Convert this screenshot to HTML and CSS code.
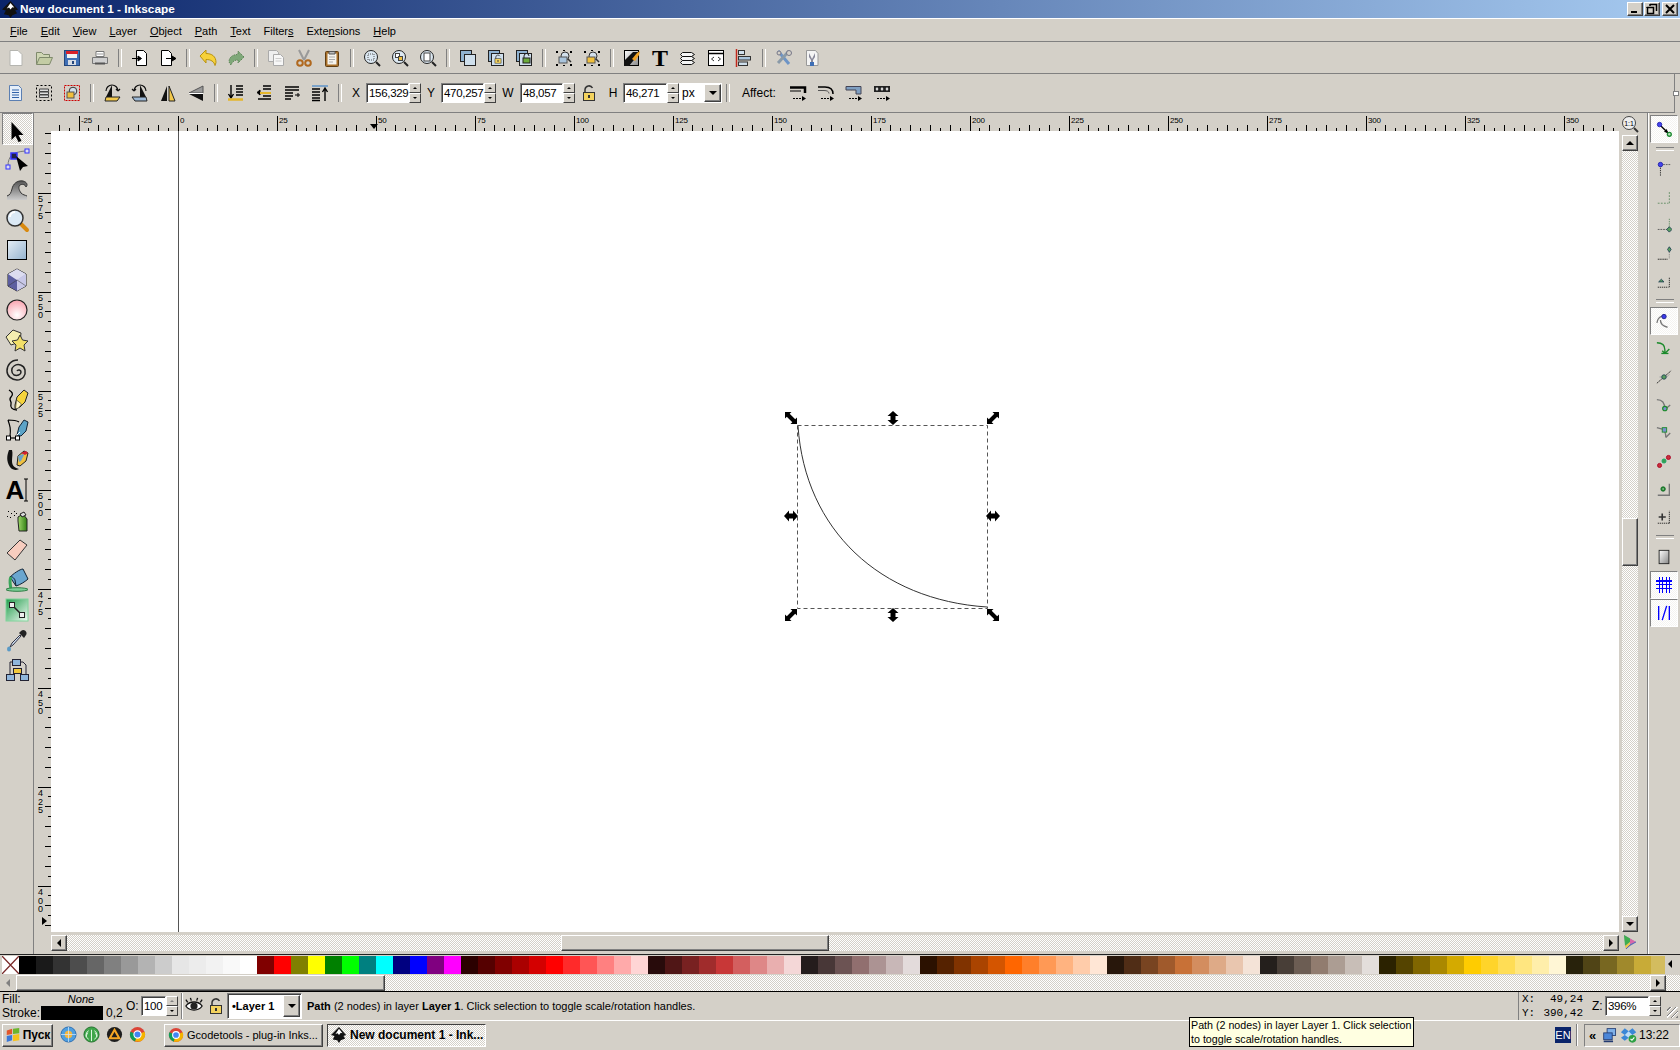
FILE: index.html
```html
<!DOCTYPE html>
<html lang="en">
<head>
<meta charset="utf-8">
<title>New document 1 - Inkscape</title>
<link rel="stylesheet" href="styles.css">
</head>
<body>
<svg class="defs" width="0" height="0" aria-hidden="true">
<defs>
<linearGradient id="gBlue" x1="0" y1="0" x2="1" y2="1"><stop offset="0" stop-color="#e6eef5"/><stop offset="1" stop-color="#94b3cf"/></linearGradient>
<linearGradient id="gGray" x1="0" y1="0" x2="0" y2="1"><stop offset="0" stop-color="#555"/><stop offset="1" stop-color="#ccc"/></linearGradient>
<linearGradient id="gWB" x1="0" y1="0" x2="1" y2="1"><stop offset="0" stop-color="#fff"/><stop offset="1" stop-color="#888"/></linearGradient>
<linearGradient id="gGreen" x1="0" y1="0" x2="1" y2="1"><stop offset="0" stop-color="#1f9c4a"/><stop offset="1" stop-color="#f2faf4"/></linearGradient>
<radialGradient id="gPink" cx=".5" cy=".75" r=".7"><stop offset="0" stop-color="#fff"/><stop offset="1" stop-color="#f9a9b4"/></radialGradient>
<linearGradient id="gCan" x1="0" y1="0" x2="1" y2="0"><stop offset="0" stop-color="#9fd86a"/><stop offset="1" stop-color="#2f7d12"/></linearGradient>
<symbol id="dbl" viewBox="0 0 12 14" overflow="visible"><path d="M6 0l5.500 5H8.500v4h3L6 14 .5 9h3V5H.5z" fill="#000"/></symbol>
<symbol id="diag" viewBox="0 0 12 12" overflow="visible"><path d="M0 0h6.500L4.700 1.800l5.500 5.500L12 5.500V12H5.500l1.800-1.800-5.500-5.500L0 6.500z" fill="#000"/></symbol>
<symbol id="tickH" viewBox="0 0 99 6"><path d="M9.500 3v3M19.500 0v6M29.500 3v3M39.500 0v6M49.500 3v3M59.500 0v6M69.500 3v3M79.500 0v6M89.500 3v3" stroke="#000" shape-rendering="crispEdges"/></symbol>
<symbol id="tickV" viewBox="0 0 6 99"><path d="M3 9.500h3M0 19.500h6M3 29.500h3M0 39.500h6M3 49.500h3M0 59.500h6M3 69.500h3M0 79.500h6M3 89.500h3" stroke="#000" shape-rendering="crispEdges"/></symbol>
<symbol id="lock" viewBox="0 0 18 18"><path d="M5 9V5.500a4 4 0 0 1 7.500-1.500" fill="none" stroke="#333" stroke-width="1.500"/><rect x="3.500" y="8.500" width="11" height="8" fill="#f4d35e" stroke="#333"/><rect x="8" y="11" width="2" height="3" fill="#333"/></symbol>
<symbol id="ink" viewBox="0 0 18 18"><path d="M9 0l8 9-3 1 2 3-5 2-2 3-2-3-5-1 2-4-4-1z" fill="#111"/><path d="M9 2l4 5-2-.5-2 2.500-1.500-2-2.500 1z" fill="#fff"/></symbol>
<symbol id="chrome" viewBox="0 0 18 18"><circle cx="9" cy="9" r="8" fill="#db4437"/><path d="M9 9L1.500 6a8 8 0 0 0 5 10.500z" fill="#0f9d58"/><path d="M9 9l7.500-3a8 8 0 0 1-5 10.500L6.500 16.500z" fill="#f4b400"/><circle cx="9" cy="9" r="3.800" fill="#4285f4" stroke="#fff" stroke-width="1.200"/></symbol>
</defs>
</svg>

<div class="app">
<header class="titlebar">
<svg class="title-ico" viewBox="0 0 18 18"><use href="#ink"/></svg>
<span class="title-text">New document 1 - Inkscape</span>
<div class="win-btns">
<span class="raised wbtn"><i class="w-min"></i></span>
<span class="raised wbtn"><svg viewBox="0 0 12 12" width="12" height="12"><path d="M4 1.500h6.500V8M1.500 4.500h6v6h-6z M4 1v2M1 4v1" fill="none" stroke="#000" stroke-width="1.500"/></svg></span>
<span class="raised wbtn wclose"><svg viewBox="0 0 12 12" width="12" height="12"><path d="M2 2l8 8M10 2l-8 8" stroke="#000" stroke-width="2"/></svg></span>
</div>
</header>

<nav class="menubar">
<span><u>F</u>ile</span><span><u>E</u>dit</span><span><u>V</u>iew</span><span><u>L</u>ayer</span><span><u>O</u>bject</span><span><u>P</u>ath</span><span><u>T</u>ext</span><span>Filter<u>s</u></span><span>Exte<u>n</u>sions</span><span><u>H</u>elp</span>
</nav>

<div class="toolbar tb1">
<span class="b"><svg viewBox="0 0 18 18"><path d="M3 1.500h8l4 4v11H3z" fill="#fff" stroke="#b5b5b0"/></svg></span>
<span class="b"><svg viewBox="0 0 18 18"><path d="M1.500 15V3.500h5l2 2h6V8" fill="#cfd6b4" stroke="#7f8a6c"/><path d="M1.500 15.500l3-7h13l-3 7z" fill="#c3cca4" stroke="#7f8a6c"/></svg></span>
<span class="b"><svg viewBox="0 0 18 18"><rect x="1.500" y="1.500" width="15" height="15" fill="#3f6fb5" stroke="#24467c"/><rect x="3" y="2" width="12" height="3" fill="#d8202a"/><rect x="4" y="5" width="10" height="4" fill="#f2f2f2"/><rect x="5" y="11" width="8" height="5" fill="#d5dbe4"/><rect x="9" y="12" width="2" height="3" fill="#24467c"/></svg></span>
<span class="b"><svg viewBox="0 0 18 18"><path d="M5 2.500h8v5H5z" fill="#fff" stroke="#777"/><path d="M1.500 8.500h15v6h-15z" fill="#cfcfcf" stroke="#777"/><path d="M4 14.500h10" stroke="#555" stroke-width="2"/><path d="M6 5h6" stroke="#999"/></svg></span>
<span class="sep"></span>
<span class="b"><svg viewBox="0 0 18 18"><path d="M5.500 1.500h7l3 3v12h-10z" fill="#fff" stroke="#000"/><path d="M1 9.500h8M7 7l3.500 2.500L7 12z" stroke="#000"/></svg></span>
<span class="b"><svg viewBox="0 0 18 18"><path d="M2.500 1.500h7l3 3v12h-10z" fill="#fff" stroke="#000"/><path d="M7 9.500h8M13 7l4 2.500L13 12z" stroke="#000"/></svg></span>
<span class="sep"></span>
<span class="b"><svg viewBox="0 0 18 18"><path d="M1 7l6-6v3.500c6 0 10 3 10 9l-1 3c-1-4-4-6-9-6V14z" fill="#f6d13a" stroke="#b8920f"/></svg></span>
<span class="b"><svg viewBox="0 0 18 18"><path d="M17 8l-6-6v3.500C6 5.500 2 8 2 13l2 3c1-3 3-5 7-5v3z" fill="#7fa879" stroke="#5c8456" stroke-dasharray="1.500 1"/></svg></span>
<span class="sep"></span>
<span class="b"><svg viewBox="0 0 18 18"><path d="M1.500 1.500h8l2 2v9h-10z" fill="#eee" stroke="#aaa"/><path d="M6.500 5.500h7l3 3v8h-10z" fill="#f7f7f7" stroke="#aaa"/><path d="M8.500 9.500h6M8.500 12h6" stroke="#ccc"/></svg></span>
<span class="b"><svg viewBox="0 0 18 18"><path d="M4 1l5 10M14 1L9 11" stroke="#999" stroke-width="2"/><circle cx="5" cy="14" r="2.800" fill="none" stroke="#b0681e" stroke-width="2"/><circle cx="13" cy="14" r="2.800" fill="none" stroke="#b0681e" stroke-width="2"/></svg></span>
<span class="b"><svg viewBox="0 0 18 18"><rect x="2.500" y="2.500" width="13" height="15" rx="1" fill="#a9702a" stroke="#5f3d12"/><rect x="4.500" y="4.500" width="9" height="11" fill="#f6f4ee"/><path d="M6 2.500h6V5H6z" fill="#bbb" stroke="#555"/><path d="M6 8h6M6 10.500h6M6 13h4" stroke="#aaa"/></svg></span>
<span class="sep"></span>
<span class="b"><svg viewBox="0 0 18 18"><circle cx="8" cy="8" r="6.500" fill="#dce8f2" stroke="#222"/><rect x="5" y="5" width="6" height="6" fill="none" stroke="#555" stroke-dasharray="1 1"/><path d="M13 13l4 4" stroke="#222" stroke-width="2"/></svg></span>
<span class="b"><svg viewBox="0 0 18 18"><circle cx="8" cy="8" r="6.500" fill="#dce8f2" stroke="#222"/><rect x="4.500" y="4.500" width="4" height="4" fill="#fff" stroke="#444"/><rect x="7.500" y="7.500" width="4" height="4" fill="#f0c040" stroke="#444"/><path d="M13 13l4 4" stroke="#222" stroke-width="2"/></svg></span>
<span class="b"><svg viewBox="0 0 18 18"><circle cx="8" cy="8" r="6.500" fill="#dce8f2" stroke="#222"/><rect x="5" y="4" width="6" height="8" fill="#fff" stroke="#444"/><path d="M13 13l4 4" stroke="#222" stroke-width="2"/></svg></span>
<span class="sep"></span>
<span class="b"><svg viewBox="0 0 18 18"><rect x="1.500" y="1.500" width="11" height="11" fill="#8fb2d0" stroke="#222"/><rect x="5.500" y="5.500" width="11" height="11" fill="#cfdfec" stroke="#222"/></svg></span>
<span class="b"><svg viewBox="0 0 18 18"><rect x="1.500" y="1.500" width="11" height="11" fill="#8fb2d0" stroke="#222"/><rect x="4.500" y="4.500" width="12" height="12" fill="#cfdfec" stroke="#222"/><use href="#lock" x="6" y="5" width="10" height="10"/></svg></span>
<span class="b"><svg viewBox="0 0 18 18"><rect x="1.500" y="1.500" width="11" height="11" fill="#8fb2d0" stroke="#222"/><rect x="4.500" y="4.500" width="12" height="12" fill="#cfdfec" stroke="#222"/><rect x="8" y="9" width="7" height="5" fill="#6cab3c" stroke="#222"/><path d="M9 9V7a2.500 2.500 0 0 1 5 0" fill="none" stroke="#222"/></svg></span>
<span class="sep"></span>
<span class="b"><svg viewBox="0 0 18 18"><path d="M1 2h2v2H1zM15 2h2v2h-2zM1 15h2v2H1zM15 15h2v2h-2z M8 1h2v1H8zM8 16h2v1H8z"/><circle cx="10" cy="7" r="4" fill="#d2e0ec" stroke="#333"/><rect x="4" y="8" width="8" height="6" fill="#a9c4dc" stroke="#555"/><path d="M13 10l3 3" stroke="#333" stroke-width="1.500"/></svg></span>
<span class="b"><svg viewBox="0 0 18 18"><path d="M1 2h2v2H1zM15 2h2v2h-2zM1 15h2v2H1zM15 15h2v2h-2z M8 1h2v1H8zM8 16h2v1H8z"/><circle cx="10" cy="7" r="4" fill="#d2e0ec" stroke="#333"/><rect x="4" y="8" width="8" height="6" fill="#f0bf3c" stroke="#555"/><path d="M13 10l3 3" stroke="#333" stroke-width="1.500"/></svg></span>
<span class="sep"></span>
<span class="b"><svg viewBox="0 0 18 18"><rect x="1.500" y="1.500" width="14" height="15" fill="url(#gWB)" stroke="#000"/><path d="M1 17l0-5L10 3l5 0 0 3-9 11z" fill="#111"/><path d="M9 10l5-6 3-2-1 4-4 6z" fill="#f0a020"/></svg></span>
<span class="b b-text"><span class="t-icon">T</span></span>
<span class="b"><svg viewBox="0 0 18 18"><path d="M3.500 3.500h9l3 2-3 2h-9l-2-2zM3.500 7.500h9l3 2-3 2h-9l-2-2zM3.500 11.500h9l3 2-3 2h-9l-2-2z" fill="#f4f4f4" stroke="#111"/></svg></span>
<span class="b"><svg viewBox="0 0 18 18"><rect x="1.500" y="1.500" width="15" height="15" fill="#fff" stroke="#000"/><path d="M2 4.500h14" stroke="#000" stroke-width="1.500"/><path d="M7 8l-2.500 2L7 12M11 8l2.500 2L11 12" fill="none" stroke="#333"/></svg></span>
<span class="b"><svg viewBox="0 0 18 18"><path d="M1.500 0v18" stroke="#c0281c" stroke-width="1.500"/><rect x="3.500" y="1.500" width="6" height="4" fill="#cfdfec" stroke="#333"/><rect x="3.500" y="7.500" width="12" height="3.500" fill="#a9c4dc" stroke="#333"/><rect x="3.500" y="13" width="9" height="3.500" fill="#cfdfec" stroke="#333"/></svg></span>
<span class="sep"></span>
<span class="b"><svg viewBox="0 0 18 18"><path d="M3 2l11 13" stroke="#6d94c6" stroke-width="3"/><path d="M14 2L3 14" stroke="#8a9aa8" stroke-width="3"/><circle cx="14" cy="4" r="2.500" fill="#d4d0c8" stroke="#778"/><circle cx="4" cy="4" r="2" fill="#d4d0c8" stroke="#778"/></svg></span>
<span class="b"><svg viewBox="0 0 18 18"><path d="M3.500 1.500h9l2.500 3v12h-11.500z" fill="#f4f4f4" stroke="#999"/><path d="M6 4l3 6 3-6v4l-2 3v4H8v-4L6 8z" fill="#889" /><rect x="7" y="13" width="4" height="4" fill="#3f6fb5"/></svg></span>
</div>

<div class="toolbar tb2">
<span class="b"><svg viewBox="0 0 18 18"><path d="M2.500 1.500h9l3 3v12h-12z" fill="#e6effa" stroke="#5b7fb2"/><path d="M5 6h7M5 8.500h7M5 11h7M5 13.500h7" stroke="#2f62aa"/></svg></span>
<span class="b"><svg viewBox="0 0 18 18"><rect x="1.500" y="1.500" width="15" height="15" fill="none" stroke="#000" stroke-dasharray="2 2"/><path d="M4.500 5h9v2.500h-9zM4.500 8h9v2.500h-9zM4.500 11h9v2.500h-9z" fill="#ddd" stroke="#444"/></svg></span>
<span class="b"><svg viewBox="0 0 18 18"><rect x="1.500" y="1.500" width="15" height="15" fill="none" stroke="#c00" stroke-dasharray="2 1"/><circle cx="10" cy="7" r="3.800" fill="#d2e0ec" stroke="#333"/><rect x="4" y="8" width="7" height="6" fill="#f0bf3c" stroke="#555"/></svg></span>
<span class="sep"></span>
<span class="b"><svg viewBox="0 0 18 18"><path d="M9 1v12H3z" fill="#111"/><path d="M9 13l8 0-3 4H2l1-4z" fill="#f2c84b" stroke="#222"/><path d="M3 7a6 6 0 0 1 12 0M15 7l-2-2M15 7l2-2" fill="none" stroke="#111" stroke-width="1.200"/></svg></span>
<span class="b"><svg viewBox="0 0 18 18"><path d="M9 1v12h6z" fill="#111"/><path d="M9 13H1l3 4h12l-1-4z" fill="#9db9d6" stroke="#222"/><path d="M3 7a6 6 0 0 1 12 0M3 7l-2-2M3 7l2-2" fill="none" stroke="#111" stroke-width="1.200"/></svg></span>
<span class="b"><svg viewBox="0 0 18 18"><path d="M8 2v15H2z" fill="#111"/><path d="M10 2v15h6z" fill="#f2c84b" stroke="#222"/></svg></span>
<span class="b"><svg viewBox="0 0 18 18"><path d="M16 2v7H2z" fill="#999" stroke="#555"/><path d="M16 17v-7H2z" fill="#111"/><path d="M2 9.500h14" stroke="#fff"/></svg></span>
<span class="sep"></span>
<span class="b"><svg viewBox="0 0 18 18"><path d="M4 1v12M1.500 10L4 14l2.500-4" fill="none" stroke="#000" stroke-width="1.400"/><path d="M9 2h7M9 5h7M9 8h7M9 11h7" stroke="#000" stroke-width="1.500"/><path d="M1 15.500h15" stroke="#e4b62c" stroke-width="2.500"/></svg></span>
<span class="b"><svg viewBox="0 0 18 18"><path d="M8 2h8M8 5h8M8 12h8" stroke="#000" stroke-width="1.500"/><path d="M2 8.500l3-2.500v5zM5 8.500h4" stroke="#000"/><path d="M3 15h13" stroke="#000" stroke-width="1.500"/><path d="M5 9h11" stroke="#e4b62c" stroke-width="2"/></svg></span>
<span class="b"><svg viewBox="0 0 18 18"><path d="M2 3h14M2 6h14M2 9h8M2 12h8M2 15h6" stroke="#000" stroke-width="1.500"/><path d="M12 11h5M15 9v4" stroke="#000"/></svg></span>
<span class="b"><svg viewBox="0 0 18 18"><path d="M1 2h16" stroke="#7ca3c9" stroke-width="2"/><path d="M1 5h8M1 8h8M1 11h8M1 14h8M1 16.500h8" stroke="#000" stroke-width="1.500"/><path d="M14 17V5M11.500 8L14 4l2.500 4" fill="none" stroke="#000" stroke-width="1.400"/></svg></span>
<span class="sep"></span>
<span class="lbl">X</span>
<span class="spin-field w43"><span class="field">156,329</span><span class="spin"><i class="su"></i><i class="sd"></i></span></span>
<span class="lbl">Y</span>
<span class="spin-field w43"><span class="field">470,257</span><span class="spin"><i class="su"></i><i class="sd"></i></span></span>
<span class="lbl lbl-w">W</span>
<span class="spin-field w43"><span class="field">48,057</span><span class="spin"><i class="su"></i><i class="sd"></i></span></span>
<span class="b"><svg viewBox="0 0 18 18"><use href="#lock"/></svg></span>
<span class="lbl">H</span>
<span class="spin-field w44"><span class="field">46,271</span><span class="spin"><i class="su"></i><i class="sd"></i></span></span>
<span class="unit"><span class="unit-text">px</span><span class="raised unit-arrow"><i class="tri-d"></i></span></span>
<span class="sep"></span>
<span class="affect">Affect:</span>
<span class="b"><svg viewBox="0 0 18 18"><path d="M1 3.500h15V9" fill="none" stroke="#000" stroke-width="2.500"/><path d="M1 7h11" stroke="#000"/><path d="M4 14.500h9" stroke="#000" stroke-dasharray="2 1"/><path d="M13 12l4 2.500-4 2.500z"/></svg></span>
<span class="b"><svg viewBox="0 0 18 18"><path d="M1 3h7c5 0 8 2 8 7" fill="none" stroke="#000" stroke-width="1.500"/><path d="M1 6.500h6c3 0 5 1 5 3" fill="none" stroke="#555"/><path d="M4 14.500h9" stroke="#000" stroke-dasharray="2 1"/><path d="M13 12l4 2.500-4 2.500z"/></svg></span>
<span class="b"><svg viewBox="0 0 18 18"><path d="M1 2.500h15V10H11V6H1z" fill="#7f9fc2" stroke="#445"/><path d="M4 14.500h9" stroke="#000" stroke-dasharray="2 1"/><path d="M13 12l4 2.500-4 2.500z"/></svg></span>
<span class="b"><svg viewBox="0 0 18 18"><path d="M1 2h16v6H1z" fill="#222"/><path d="M4 3l1.500 2L4 7 2.500 5zM9 3l1.500 2L9 7 7.500 5zM14 3l1.500 2L14 7l-1.500-2z" fill="#ddd"/><path d="M4 14.500h9" stroke="#000" stroke-dasharray="2 1"/><path d="M13 12l4 2.500-4 2.500z"/></svg></span>
</div>

<main class="workspace">
<aside class="tools">
<span class="tool tool-first on"><svg viewBox="0 0 24 24"><path d="M6.500 3v18l4-4 3 6 3-1-3-6h5z" fill="#000"/></svg></span>
<span class="tool"><svg viewBox="0 0 24 24"><path d="M3 18C3 8 8 4 20 3" fill="none" stroke="#777"/><rect x="1" y="17" width="4" height="4" fill="#dde" stroke="#33f"/><rect x="20" y="1" width="4" height="4" fill="#dde" stroke="#33f"/><rect x="6" y="5" width="6" height="6" fill="#224" stroke="#33f" stroke-width="1.500"/><path d="M11 8l12 10-5 1-3 4z" fill="#000"/></svg></span>
<span class="tool"><svg viewBox="0 0 24 24"><path d="M2 22v-4c3-1 4-3 5-7 1-5 5-9 11-8 4 1 5 4 3 6-1-3-4-3-6-2-2 2-1 5 1 8 2 2 4 2 6 3v4z" fill="url(#gGray)"/><path d="M2 18c3-1 4-3 5-7 1-5 5-9 11-8 4 1 5 4 3 6-1-3-4-3-6-2-2 2-1 5 1 8 2 2 4 2 6 3" fill="none" stroke="#333"/></svg></span>
<span class="tool"><svg viewBox="0 0 24 24"><path d="M15 15l7 7" stroke="#d98a10" stroke-width="4" stroke-linecap="round"/><circle cx="10" cy="10" r="8" fill="#dbe9f5" stroke="#333" stroke-width="1.500"/><path d="M5 9a5 5 0 0 1 5-5" fill="none" stroke="#fff" stroke-width="2"/></svg></span>
<span class="tool"><svg viewBox="0 0 24 24"><rect x="2.500" y="2.500" width="19" height="19" fill="url(#gBlue)" stroke="#000"/></svg></span>
<span class="tool"><svg viewBox="0 0 24 24"><path d="M12 1l9 5 0 12-9 5-9-5V6z" fill="#9a9ccc" stroke="#222"/><path d="M12 12l9-6v12l-9 5z" fill="#c8c8e8"/><path d="M3 6l9 6v11l-9-5z" fill="#5c5ea0"/><path d="M12 1l9 5-9 6-9-6z" fill="#dcdcf0"/><path d="M3 18l9-6 9 6" fill="none" stroke="#333" stroke-width=".5"/></svg></span>
<span class="tool"><svg viewBox="0 0 24 24"><circle cx="12" cy="12" r="10" fill="url(#gPink)" stroke="#222" stroke-width="1.200"/></svg></span>
<span class="tool"><svg viewBox="0 0 24 24"><path d="M1 9l7-7 8 3-1 9-9 3z" fill="#f5eeb0" stroke="#333"/><path d="M15 7l2.500 5 5.500 1-4 4 1 6-5-3-5 3 1-6-4-4 5.500-1z" fill="#f2df68" stroke="#333"/></svg></span>
<span class="tool"><svg viewBox="0 0 24 24"><path d="M12 13c1-2 4-1 4 1 0 3-4 4-7 3-3-2-3-7 0-9 4-3 10-1 11 4 1 5-2 10-8 10-5 0-10-4-10-9C2 7 6 2 13 2" fill="none" stroke="#222" stroke-width="1.500"/></svg></span>
<span class="tool"><svg viewBox="0 0 24 24"><path d="M4 2c3 2 5 4 2 7-3 3 1 4 0 7-1 3 1 6 6 6" fill="none" stroke="#000" stroke-width="1.300"/><path d="M10 17l2-8 7-7 4 3-3 9-5 5-5 2z" fill="#f5d33c" stroke="#222"/><path d="M11.500 12l5 4-3 4-3 1z" fill="#fff6c8" stroke="#222" stroke-width=".6"/></svg></span>
<span class="tool"><svg viewBox="0 0 24 24"><path d="M3 2c5 0 8 0 11 2M3 2c2 6 3 9 2 16" fill="none" stroke="#000" stroke-width="1.200"/><path d="M5 20h7" stroke="#000" stroke-width="1.200"/><rect x="1.500" y="18" width="4" height="4" fill="#fff" stroke="#000"/><rect x="10.500" y="18" width="4" height="4" fill="#fff" stroke="#000"/><path d="M12 17l2-8 5-7 4 2-2 9-5 5z" fill="#5ca3c7" stroke="#123"/><path d="M12 17l3-3" stroke="#fff"/></svg></span>
<span class="tool"><svg viewBox="0 0 24 24"><path d="M4 2c-2 5-3 11 1 17 3 4 8 3 9 2-4-1-7-3-7-8 0-4 1-8 0-11z" fill="#111"/><path d="M12 17l1-9 6-5 4 2-2 8-6 5z" fill="#f0c040" stroke="#222"/><path d="M16 5l5-2 2 2-3 2z" fill="#d02030"/><path d="M13 8l5-2 1 1-3 6-2 1z" fill="#6aa3c9"/></svg></span>
<span class="tool"><svg viewBox="0 0 24 24"><text x="10" y="21" class="t-tool">A</text><path d="M21 1v22M19 1h4M19 23h4" stroke="#000"/></svg></span>
<span class="tool"><svg viewBox="0 0 24 24"><path d="M13 9l5-3 4 5v12h-8l-1-10z" fill="url(#gCan)" stroke="#222"/><path d="M15 6l4-2 2 3-4 2z" fill="#ddd" stroke="#222"/><path d="M3 3h1v1H3zM6 5h1v1H6zM9 3h1v1H9zM2 8h1v1H2zM5 9h1v1H5zM9 7h1v1H9zM11 5h1v1h-1z" fill="#000"/></svg></span>
<span class="tool"><svg viewBox="0 0 24 24"><path d="M2 15L15 2l7 5-12 15z" fill="#f7cdbf" stroke="#333"/></svg></span>
<span class="tool"><svg viewBox="0 0 24 24"><path d="M5 9c3-3 10-8 13-8l5 10c-2 2-8 6-12 7z" fill="#6aa6cf" stroke="#123"/><path d="M5 9c2-1 4 1 5 3l1 6" fill="none" stroke="#123"/><path d="M6 9c-2 3-1 6 0 12" fill="none" stroke="#3aa65a" stroke-width="3"/><ellipse cx="12" cy="21.500" rx="11" ry="1.800" fill="#7bd096" stroke="#2f7d45"/></svg></span>
<span class="tool"><svg viewBox="0 0 24 24"><rect x="1" y="1" width="22" height="22" fill="url(#gGreen)" stroke="#7fd49a"/><path d="M7 7l10 10" stroke="#222" stroke-width="1.500"/><rect x="4.500" y="4.500" width="5" height="5" fill="#eee" stroke="#222"/><rect x="14.500" y="14.500" width="5" height="5" fill="#eee" stroke="#222"/></svg></span>
<span class="tool"><svg viewBox="0 0 24 24"><path d="M16 8L8 17l-3 2 2-4 8-8z" fill="#cde" stroke="#334"/><path d="M14 5l5 5 2-3c2-3-2-7-5-4z" fill="#222"/><ellipse cx="4" cy="21" rx="2" ry="2.500" fill="#5a9ac6"/></svg></span>
<span class="tool"><svg viewBox="0 0 24 24"><rect x="7.500" y="1.500" width="8" height="6" fill="#8fb6dc" stroke="#223"/><rect x="8.500" y="10.500" width="8" height="5" fill="#f2c83c" stroke="#223"/><rect x="1.500" y="16.500" width="8" height="6" fill="#8fb6dc" stroke="#223"/><rect x="15.500" y="16.500" width="8" height="6" fill="#8fb6dc" stroke="#223"/><path d="M7 4H5v12M16 4h2l3 3v9" fill="none" stroke="#223"/></svg></span>
</aside>

<section class="center">
<div class="hruler">
<div class="hseg hseg-lead"><svg class="tk-h"><use href="#tickH" x="-71" width="99" height="6"/></svg></div>
<div class="hseg"><b>-25</b><svg class="tk-h"><use href="#tickH" width="99" height="6"/></svg></div>
<div class="hseg"><b>0</b><svg class="tk-h"><use href="#tickH" width="99" height="6"/></svg></div>
<div class="hseg"><b>25</b><svg class="tk-h"><use href="#tickH" width="99" height="6"/></svg></div>
<div class="hseg"><b>50</b><svg class="tk-h"><use href="#tickH" width="99" height="6"/></svg></div>
<div class="hseg"><b>75</b><svg class="tk-h"><use href="#tickH" width="99" height="6"/></svg></div>
<div class="hseg"><b>100</b><svg class="tk-h"><use href="#tickH" width="99" height="6"/></svg></div>
<div class="hseg"><b>125</b><svg class="tk-h"><use href="#tickH" width="99" height="6"/></svg></div>
<div class="hseg"><b>150</b><svg class="tk-h"><use href="#tickH" width="99" height="6"/></svg></div>
<div class="hseg"><b>175</b><svg class="tk-h"><use href="#tickH" width="99" height="6"/></svg></div>
<div class="hseg"><b>200</b><svg class="tk-h"><use href="#tickH" width="99" height="6"/></svg></div>
<div class="hseg"><b>225</b><svg class="tk-h"><use href="#tickH" width="99" height="6"/></svg></div>
<div class="hseg"><b>250</b><svg class="tk-h"><use href="#tickH" width="99" height="6"/></svg></div>
<div class="hseg"><b>275</b><svg class="tk-h"><use href="#tickH" width="99" height="6"/></svg></div>
<div class="hseg"><b>300</b><svg class="tk-h"><use href="#tickH" width="99" height="6"/></svg></div>
<div class="hseg"><b>325</b><svg class="tk-h"><use href="#tickH" width="99" height="6"/></svg></div>
<div class="hseg"><b>350</b><svg class="tk-h"><use href="#tickH" width="99" height="6"/></svg></div>
<i class="marker-h"></i>
</div>
<div class="zoomcorner"><svg viewBox="0 0 18 18" width="18" height="18"><circle cx="8" cy="8" r="6.500" fill="#eee" stroke="#444"/><text x="8" y="11" class="t-11">1:1</text><path d="M13 13l4 4" stroke="#333" stroke-width="2"/></svg></div>
<div class="vruler">
<div class="vseg vseg-lead"><svg class="tk-v"><use href="#tickV" y="-37" width="6" height="99"/></svg></div>
<div class="vseg"><b><span>5</span><span>7</span><span>5</span></b><svg class="tk-v"><use href="#tickV" width="6" height="99"/></svg></div>
<div class="vseg"><b><span>5</span><span>5</span><span>0</span></b><svg class="tk-v"><use href="#tickV" width="6" height="99"/></svg></div>
<div class="vseg"><b><span>5</span><span>2</span><span>5</span></b><svg class="tk-v"><use href="#tickV" width="6" height="99"/></svg></div>
<div class="vseg"><b><span>5</span><span>0</span><span>0</span></b><svg class="tk-v"><use href="#tickV" width="6" height="99"/></svg></div>
<div class="vseg"><b><span>4</span><span>7</span><span>5</span></b><svg class="tk-v"><use href="#tickV" width="6" height="99"/></svg></div>
<div class="vseg"><b><span>4</span><span>5</span><span>0</span></b><svg class="tk-v"><use href="#tickV" width="6" height="99"/></svg></div>
<div class="vseg"><b><span>4</span><span>2</span><span>5</span></b><svg class="tk-v"><use href="#tickV" width="6" height="99"/></svg></div>
<div class="vseg"><b><span>4</span><span>0</span><span>0</span></b><svg class="tk-v"><use href="#tickV" width="6" height="99"/></svg></div>
<i class="marker-v"></i>
</div>
<div class="canvas">
<svg class="drawing" viewBox="51 131 1568 801" width="1568" height="801">
<path d="M178.500 131v801" stroke="#555" fill="none"/>
<rect x="797.500" y="425.500" width="190" height="183" fill="none" stroke="#555" stroke-dasharray="4 3"/>
<path d="M798 426C805 530 880 600 987 607" fill="none" stroke="#333"/>
<use href="#dbl" x="887" y="411" width="12" height="14"/>
<use href="#dbl" x="887" y="608" width="12" height="14"/>
<use href="#dbl" x="785" y="509" width="12" height="14" transform="rotate(90 791 516)"/>
<use href="#dbl" x="987" y="509" width="12" height="14" transform="rotate(90 993 516)"/>
<use href="#diag" x="785" y="412" width="12" height="12"/>
<use href="#diag" x="987" y="412" width="12" height="12" transform="translate(1986 0) scale(-1 1)"/>
<use href="#diag" x="785" y="609" width="12" height="12" transform="translate(1582 0) scale(-1 1)"/>
<use href="#diag" x="987" y="609" width="12" height="12"/>
</svg>
</div>
<div class="vscroll-cell">
<div class="vscroll checker">
<span class="raised arrow-btn"><i class="tri-u"></i></span>
<span class="raised vthumb"></span>
<span class="v-fill"></span>
<span class="raised arrow-btn"><i class="tri-d"></i></span>
</div>
</div>
<div class="hscroll-cell">
<div class="hscroll checker">
<span class="raised arrow-btn"><i class="tri-l"></i></span>
<span class="raised hthumb"></span>
<span class="h-fill"></span>
<span class="raised arrow-btn"><i class="tri-r"></i></span>
</div>
</div>
<div class="cms-cell"><svg viewBox="0 0 14 16" width="14" height="16"><path d="M1 1l12 7-10 7z" fill="#9a8fb0"/><path d="M1 1l6 3.500v3.500L2 12z" fill="#3fae4f"/><path d="M7 4.500L13 8l-6 2z" fill="#d968a8"/><path d="M2 12l5-4v3l-4 4z" fill="#e8c84a"/><path d="M3 15l4-4 6-3" fill="none" stroke="#5566bb"/></svg></div>
</section>

<aside class="snapbar">
<span class="snap on"><svg viewBox="0 0 18 18"><path d="M5 5l8 8" stroke="#000" stroke-width="1.500"/><path d="M9 12l5 2-2-5z"/><circle cx="4" cy="4" r="2.500" fill="#4444ee" stroke="#2222aa"/><circle cx="15" cy="15" r="2.200" fill="#bde0c0" stroke="#1c8a30" stroke-width="1.500"/></svg></span>
<span class="snap-sep"></span>
<span class="snap"><svg viewBox="0 0 18 18"><path d="M5 4h12" stroke="#555" stroke-dasharray="2 1"/><path d="M5 5v12" stroke="#222" stroke-dasharray="1.500 1"/><circle cx="5" cy="4" r="2.500" fill="#4444ee" stroke="#2222aa"/></svg></span>
<span class="snap"><svg viewBox="0 0 18 18"><path d="M2 16h12M15 16V2" stroke="#5c8a60" stroke-dasharray="2 1.500"/></svg></span>
<span class="snap"><svg viewBox="0 0 18 18"><path d="M2 14h12" stroke="#555" stroke-dasharray="2 1"/><path d="M15 2v10" stroke="#5c8a60" stroke-dasharray="1.500 1"/><path d="M15 11l3 3-3 3-3-3z" fill="#5aa05f" stroke="#245"/></svg></span>
<span class="snap"><svg viewBox="0 0 18 18"><path d="M2 16h11" stroke="#222" stroke-dasharray="1.500 .5"/><path d="M15 8v8" stroke="#777" stroke-dasharray="1 1"/><path d="M15 2l2 3-2 3-2-3z" fill="#5aa05f" stroke="#245"/></svg></span>
<span class="snap"><svg viewBox="0 0 18 18"><path d="M2 16h12M15 16V5" stroke="#222" stroke-dasharray="1.500 .8"/><path d="M6 7l3 3H3z" fill="#5aa05f" stroke="#245"/></svg></span>
<span class="snap-sep"></span>
<span class="snap on"><svg viewBox="0 0 18 18"><path d="M1 11C2 5 6 3 10 3" fill="none" stroke="#777" stroke-width="1.500"/><path d="M5 8c0 5 3 7 8 8" fill="none" stroke="#777" stroke-width="1.500"/><circle cx="9" cy="4" r="2.500" fill="#3a3ae8" stroke="#228"/></svg></span>
<span class="snap"><svg viewBox="0 0 18 18"><path d="M1 2c6 0 9 3 9 8v4M10 14l5-5M10 14l-3-3" fill="none" stroke="#1a8a2a" stroke-width="1.500"/><path d="M6 14h8" stroke="#1a8a2a" stroke-width="1.500"/></svg></span>
<span class="snap"><svg viewBox="0 0 18 18"><path d="M1 16L17 2" stroke="#222" stroke-dasharray="2 .6"/><path d="M4 9h8l3-3" stroke="#999" fill="none"/><circle cx="9" cy="9" r="2.500" fill="#5aa05f" stroke="#245"/></svg></span>
<span class="snap"><svg viewBox="0 0 18 18"><path d="M1 3c6 0 9 3 9 11M10 14l6-5" fill="none" stroke="#777" stroke-width="1.500"/><circle cx="10" cy="13" r="2.500" fill="#7a90d0" stroke="#1a8a2a" stroke-width="1.300"/></svg></span>
<span class="snap"><svg viewBox="0 0 18 18"><path d="M1 3l7 2c3 2 3 6 3 9M11 14l5-5" fill="none" stroke="#777" stroke-width="1.500"/><rect x="7" y="3" width="5" height="5" fill="#7a90d0" stroke="#1a8a2a"/></svg></span>
<span class="snap"><svg viewBox="0 0 18 18"><path d="M2 16L17 2" stroke="#bbb" stroke-dasharray="2 1"/><circle cx="4" cy="14" r="2.300" fill="#c8303a" stroke="#a02"/><circle cx="9" cy="9" r="2.300" fill="#3a9a50" stroke="#1a6"/><circle cx="14" cy="5" r="2.300" fill="#c8303a" stroke="#a02"/></svg></span>
<span class="snap"><svg viewBox="0 0 18 18"><path d="M2 16h13V3" fill="none" stroke="#777" stroke-width="1.500"/><circle cx="8" cy="9" r="2.500" fill="#1a8a2a" stroke="#1a6a2a"/><circle cx="8" cy="9" r=".8" fill="#ddd"/></svg></span>
<span class="snap"><svg viewBox="0 0 18 18"><path d="M7 5v8M3 9h8" stroke="#333" stroke-width="1.800"/><path d="M2 16h13M15 16V2" stroke="#222" stroke-dasharray="1.500 .8"/></svg></span>
<span class="snap-sep"></span>
<span class="snap"><svg viewBox="0 0 18 18"><rect x="3.500" y="1.500" width="11" height="15" fill="url(#gWB)" stroke="#222"/></svg></span>
<span class="snap on"><svg viewBox="0 0 18 18"><path d="M0 4.500h18M0 8.500h18M0 12.500h18M3.500 0v18M7.500 0v18M11.500 0v18M15.500 0v18" stroke="#00f" stroke-width="1.200" shape-rendering="crispEdges"/></svg></span>
<span class="snap on"><svg viewBox="0 0 18 18"><path d="M3 1v16M15 1v16M12 1L7 17" stroke="#00f" stroke-width="1.500"/></svg></span>
</aside>
</main>

<div class="palette">
<span class="swatch none"><svg viewBox="0 0 17 18" preserveAspectRatio="none"><path d="M0 0l17 18M17 0L0 18" stroke="#7a2b2b" stroke-width="1.300"/></svg></span>
<span class="swatch" style="background:#000000"></span><span class="swatch" style="background:#1a1a1a"></span><span class="swatch" style="background:#333333"></span><span class="swatch" style="background:#4d4d4d"></span><span class="swatch" style="background:#666666"></span><span class="swatch" style="background:#808080"></span><span class="swatch" style="background:#999999"></span><span class="swatch" style="background:#b3b3b3"></span><span class="swatch" style="background:#cccccc"></span><span class="swatch" style="background:#e6e6e6"></span><span class="swatch" style="background:#ececec"></span><span class="swatch" style="background:#f2f2f2"></span><span class="swatch" style="background:#f9f9f9"></span><span class="swatch" style="background:#ffffff"></span>
<span class="swatch" style="background:#800000"></span><span class="swatch" style="background:#ff0000"></span><span class="swatch" style="background:#808000"></span><span class="swatch" style="background:#ffff00"></span><span class="swatch" style="background:#008000"></span><span class="swatch" style="background:#00ff00"></span><span class="swatch" style="background:#008080"></span><span class="swatch" style="background:#00ffff"></span><span class="swatch" style="background:#000080"></span><span class="swatch" style="background:#0000ff"></span><span class="swatch" style="background:#800080"></span><span class="swatch" style="background:#ff00ff"></span>
<span class="swatch" style="background:#2b0000"></span><span class="swatch" style="background:#550000"></span><span class="swatch" style="background:#800000"></span><span class="swatch" style="background:#aa0000"></span><span class="swatch" style="background:#d40000"></span><span class="swatch" style="background:#ff0000"></span><span class="swatch" style="background:#ff2a2a"></span><span class="swatch" style="background:#ff5555"></span><span class="swatch" style="background:#ff8080"></span><span class="swatch" style="background:#ffaaaa"></span><span class="swatch" style="background:#ffd5d5"></span>
<span class="swatch" style="background:#280b0b"></span><span class="swatch" style="background:#501616"></span><span class="swatch" style="background:#782121"></span><span class="swatch" style="background:#a02c2c"></span><span class="swatch" style="background:#c83737"></span><span class="swatch" style="background:#d35f5f"></span><span class="swatch" style="background:#de8787"></span><span class="swatch" style="background:#e9afaf"></span><span class="swatch" style="background:#f4d7d7"></span>
<span class="swatch" style="background:#241c1c"></span><span class="swatch" style="background:#483737"></span><span class="swatch" style="background:#6c5353"></span><span class="swatch" style="background:#916f6f"></span><span class="swatch" style="background:#ac9393"></span><span class="swatch" style="background:#c8b7b7"></span><span class="swatch" style="background:#e3dbdb"></span>
<span class="swatch" style="background:#2b1100"></span><span class="swatch" style="background:#552200"></span><span class="swatch" style="background:#803300"></span><span class="swatch" style="background:#aa4400"></span><span class="swatch" style="background:#d45500"></span><span class="swatch" style="background:#ff6600"></span><span class="swatch" style="background:#ff7f2a"></span><span class="swatch" style="background:#ff9955"></span><span class="swatch" style="background:#ffb380"></span><span class="swatch" style="background:#ffccaa"></span><span class="swatch" style="background:#ffe6d5"></span>
<span class="swatch" style="background:#28170b"></span><span class="swatch" style="background:#502d16"></span><span class="swatch" style="background:#784421"></span><span class="swatch" style="background:#a05a2c"></span><span class="swatch" style="background:#c87137"></span><span class="swatch" style="background:#d38d5f"></span><span class="swatch" style="background:#deaa87"></span><span class="swatch" style="background:#e9c6af"></span><span class="swatch" style="background:#f4e3d7"></span>
<span class="swatch" style="background:#241f1c"></span><span class="swatch" style="background:#483e37"></span><span class="swatch" style="background:#6c5d53"></span><span class="swatch" style="background:#917c6f"></span><span class="swatch" style="background:#ac9d93"></span><span class="swatch" style="background:#c8beb7"></span><span class="swatch" style="background:#e3dedb"></span>
<span class="swatch" style="background:#2b2200"></span><span class="swatch" style="background:#554400"></span><span class="swatch" style="background:#806600"></span><span class="swatch" style="background:#aa8800"></span><span class="swatch" style="background:#d4aa00"></span><span class="swatch" style="background:#ffcc00"></span><span class="swatch" style="background:#ffd42a"></span><span class="swatch" style="background:#ffdd55"></span><span class="swatch" style="background:#ffe680"></span><span class="swatch" style="background:#ffeeaa"></span><span class="swatch" style="background:#fff6d5"></span>
<span class="swatch" style="background:#28220b"></span><span class="swatch" style="background:#504416"></span><span class="swatch" style="background:#786721"></span><span class="swatch" style="background:#a0892c"></span><span class="swatch" style="background:#c8ab37"></span><span class="swatch" style="background:#d3bc5f"></span>
<i class="tri-l palette-arrow"></i>
</div>

<div class="pscroll checker">
<span class="p-left"><i class="tri-l disabled"></i></span>
<span class="raised pthumb"></span>
<span class="h-fill"></span>
<span class="raised arrow-btn"><i class="tri-r"></i></span>
</div>

<footer class="status">
<div class="fs">
<div class="fs-row"><span class="fs-label">Fill:</span><em class="fs-none">None</em></div>
<div class="fs-row"><span class="fs-label">Stroke:</span><span class="stroke-sw"></span><span class="fs-w">0,2</span></div>
</div>
<span class="op-label">O:</span>
<span class="spin-field w25"><span class="field">100</span><span class="spin"><i class="su dim"></i><i class="sd"></i></span></span>
<span class="stat-sep"></span>
<svg class="stat-ico eye" viewBox="0 0 20 20"><path d="M1 10c4-6 14-6 18 0-4 6-14 6-18 0z" fill="#fff" stroke="#111" stroke-width="1.500"/><circle cx="10" cy="10" r="4" fill="#222"/><path d="M3 6L1 3M7 4L6 1M13 4l1-3M17 6l2-3" stroke="#111" stroke-width="1.500"/></svg>
<svg class="stat-ico" viewBox="0 0 18 18"><use href="#lock"/></svg>
<span class="layer-combo"><b class="layer-name">•Layer 1</b><span class="raised unit-arrow layer-arrow"><i class="tri-d"></i></span></span>
<span class="message"><b>Path</b> (2 nodes) in layer <b>Layer 1</b>. Click selection to toggle scale/rotation handles.</span>
<div class="coords">
<div class="xy"><span>X:</span><span>49,24</span><span>Y:</span><span>390,42</span></div>
<span class="z-label">Z:</span>
<span class="spin-field w45"><span class="field">396%</span><span class="spin"><i class="su"></i><i class="sd"></i></span></span>
<span class="grip"></span>
</div>
</footer>

<div class="taskbar">
<span class="raised start"><svg viewBox="0 0 18 18" width="16" height="16"><path d="M2 4l6-2v6l-6 1z" fill="#e2572b"/><path d="M9 2l7-1v6l-7 1z" fill="#6cb52d"/><path d="M2 10l6-1v6l-6 2z" fill="#3b78d8"/><path d="M9 9l7-1v7l-7 1z" fill="#f6c21c"/></svg><b>Пуск</b></span>
<span class="ql"><svg viewBox="0 0 18 18"><circle cx="9" cy="9" r="8" fill="#4f9fe0" stroke="#2b6cb0"/><circle cx="9" cy="9" r="4" fill="#f6b73c"/><path d="M9 1v16M1 9h16" stroke="#cfe6f8" stroke-width=".8"/></svg></span>
<span class="ql"><svg viewBox="0 0 18 18"><circle cx="9" cy="9" r="8" fill="#3fa64a" stroke="#1f6f2a"/><path d="M9 4v12M5 7l-2 4M13 7l2 4M6 5a5 5 0 0 0 0 9M12 5a5 5 0 0 1 0 9" fill="none" stroke="#e8f8e8"/></svg></span>
<span class="ql"><svg viewBox="0 0 18 18"><circle cx="9" cy="9" r="8" fill="#1d1d1d"/><path d="M9 4l5 9H4z" fill="none" stroke="#f5a623" stroke-width="2.200"/></svg></span>
<span class="ql"><svg viewBox="0 0 18 18"><use href="#chrome"/></svg></span>
<span class="raised task"><svg class="task-ico" viewBox="0 0 18 18"><use href="#chrome"/></svg><span>Gcodetools - plug-in Inks...</span></span>
<span class="task active"><svg class="task-ico" viewBox="0 0 18 18"><use href="#ink"/></svg><b>New document 1 - Ink...</b></span>
<span class="en">EN</span>
<span class="tray-sep"></span>
<div class="tray">
<b class="chev">«</b>
<svg viewBox="0 0 18 18" width="16" height="16"><rect x="6" y="1.500" width="10" height="8" fill="#7fb0e8" stroke="#223a70"/><rect x="2" y="6.500" width="10" height="8" fill="#4b86d8" stroke="#223a70"/><path d="M2 16.500h11" stroke="#223a70" stroke-width="2"/></svg>
<svg viewBox="0 0 18 18" width="18" height="18"><path d="M5 2l4 3 4-3 4 4-4 3 4 3-4 3-4-3-4 3-4-3 4-3-4-3z" fill="#3b87d6"/><path d="M9 5L5 9l4 3 4-3z" fill="#bcdcf8"/><circle cx="13" cy="13" r="4" fill="#2fa044"/><path d="M11 13l1.500 1.500L15 11.500" fill="none" stroke="#fff" stroke-width="1.200"/></svg>
<span class="clock">13:22</span>
</div>
</div>
</div>
<div class="tooltip">Path (2 nodes) in layer Layer 1. Click selection<br>to toggle scale/rotation handles.</div>
</body>
</html>
```
FILE: styles.css
```css
*{box-sizing:border-box}
html,body{margin:0;padding:0;width:1680px;height:1050px;overflow:hidden}
body{background:#d4d0c8;font:11px "Liberation Sans",Arial,sans-serif;color:#000;position:relative}
.defs{position:absolute}
i{display:block}
.app{display:flex;flex-direction:column;width:1680px;height:1050px}
.raised{background:#d4d0c8;border:1px solid;border-color:#fff #404040 #404040 #fff;box-shadow:inset -1px -1px 0 #808080}
.checker{background:repeating-conic-gradient(#d4d0c8 0 25%,#fff 0 50%) 0 0/2px 2px}

.titlebar{height:19px;flex:none;display:flex;align-items:center;background:linear-gradient(90deg,#0a246a,#a6caf0);border-bottom:1px solid #fff;padding:0 2px 0 2px}
.title-ico{width:17px;height:17px;flex:none}
.title-text{color:#fff;font-weight:bold;font-size:11.800px;margin-left:1px}
.win-btns{margin-left:auto;display:flex;gap:1px}
.wbtn{width:16px;height:14px;display:flex;align-items:center;justify-content:center}
.wclose{margin-left:1px}
.w-min{width:6px;height:2px;background:#000;margin-top:6px;margin-left:-2px}

.menubar{height:23px;flex:none;display:flex;align-items:center;gap:13px;padding:2px 0 0 10px;border-bottom:1px solid #808080}
.toolbar{flex:none;display:flex;align-items:center;padding-left:2px;border-bottom:1px solid #808080}
.tb1{height:32px}
.tb2{height:39px;border-right:1px solid #808080;margin-right:5px;position:relative}
.tb2::after{content:"";position:absolute;right:-5px;top:17px;width:4px;height:3px;background:#fff;border:1px solid #808080}
.b{width:28px;height:28px;flex:none;display:flex;align-items:center;justify-content:center}
.b svg{width:18px;height:18px}
.sep{width:12px;height:18px;flex:none;display:flex;justify-content:center}
.sep::before{content:"";width:2px;height:18px;border-left:1px solid #808080;border-right:1px solid #fff}
.t-icon{font:bold 24px/24px "Liberation Serif",serif}
.t-tool{font:bold 26px "Liberation Sans",sans-serif;text-anchor:middle}
.t-11{font:7px "Liberation Sans",sans-serif;text-anchor:middle}

.lbl{width:20px;flex:none;text-align:center;font-size:12px}
.lbl-w{width:24px}
.spin-field{display:flex;flex:none;height:20px}
.field{flex:1;min-width:0;background:#fff;border:1px solid;border-color:#808080 #fff #fff #808080;box-shadow:inset 1px 1px 0 #404040;padding:2px 0 0 2px;white-space:nowrap;line-height:15px;font-size:11.500px;letter-spacing:-.3px}
.w43{width:55px}
.w44{width:56px}
.w25{width:37px}
.w45{width:56px}
.spin{width:12px;flex:none;display:flex;flex-direction:column}
.spin i{flex:1;background:#d4d0c8;border:1px solid;border-color:#fff #404040 #404040 #fff;position:relative}
.spin i::after{content:"";position:absolute;left:3px;border:2px solid transparent}
.su::after{top:1px;border-bottom-color:#000!important}
.sd::after{top:3px;border-top-color:#000!important}
.su.dim::after{border-bottom-color:#808080!important}
.unit{width:43px;height:20px;flex:none;display:flex;background:#fff;align-items:center;padding-left:3px;font-size:12px}
.unit-text{flex:1}
.unit-arrow{width:17px;height:18px;margin-right:1px;display:flex;align-items:center;justify-content:center}
.affect{width:42px;margin-left:8px;flex:none;font-size:12px}
.tri-d{width:0;height:0;border:4px solid transparent;border-top:4px solid #000;border-bottom:0}
.tri-u{width:0;height:0;border:4px solid transparent;border-bottom:4px solid #000;border-top:0}
.tri-l{width:0;height:0;border:4px solid transparent;border-right:4px solid #000;border-left:0}
.tri-r{width:0;height:0;border:4px solid transparent;border-left:4px solid #000;border-right:0}
.tri-l.disabled{border-right-color:#808080}

.workspace{flex:none;height:841px;display:flex}
.tools{width:34px;flex:none;border-right:1px solid #808080;padding-left:2px;display:flex;flex-direction:column}
.tool{width:31px;height:30px;flex:none;display:flex;align-items:center;justify-content:center;padding-right:2px}
.tool svg{width:24px;height:24px;flex:none;overflow:visible}
.tool-first{height:32px;padding-top:4px}
.tool.on{background:repeating-conic-gradient(#d4d0c8 0 25%,#fff 0 50%) 0 0/2px 2px;border:1px solid;border-color:#808080 #fff #fff #808080}

.center{width:1613px;flex:none;display:grid;grid-template-columns:17px 1568px 28px;grid-template-rows:18px 801px 22px}
.hruler{grid-column:1 / 3;grid-row:1;display:flex;padding-left:17px;overflow:hidden;position:relative}
.hseg{width:99px;flex:none;height:15px;margin-top:3px;border-left:1px solid #000;display:flex;flex-direction:column;justify-content:space-between}
.hseg-lead{width:28px;border-left:0}
.hseg b{font:8px/9px "Liberation Sans",sans-serif;padding-left:1px;height:9px;letter-spacing:-.2px}
.tk-h{width:99px;height:6px;display:block;margin-left:-1px;flex:none;margin-top:auto}
.hseg-lead .tk-h{margin-left:0;width:28px}
.zoomcorner{grid-column:3;grid-row:1;display:flex;padding:2px 0 0 2px}
.marker-h{position:absolute;left:336px;top:11px;width:0;height:0;border:4px solid transparent;border-top:5px solid #000;border-bottom:0}
.vruler{grid-column:1;grid-row:2;display:flex;flex-direction:column;overflow:hidden;position:relative}
.vseg{height:99px;flex:none;margin-left:4px;width:13px;border-top:1px solid #000;display:flex;justify-content:space-between}
.vseg-lead{height:62px;border-top:0;justify-content:flex-end}
.vseg b{font:9px/8.500px "Liberation Sans",sans-serif;display:flex;flex-direction:column;padding-top:1px}
.vseg b span{display:block;height:8.500px}
.tk-v{width:6px;height:99px;display:block;margin-top:-1px;flex:none}
.vseg-lead .tk-v{height:62px;margin-top:0}
.marker-v{position:absolute;left:8px;top:786px;width:0;height:0;border:4px solid transparent;border-left:5px solid #000;border-right:0}
.canvas{grid-column:2;grid-row:2;background:#fff;position:relative;overflow:hidden}
.drawing{display:block}
.vscroll-cell{grid-column:3;grid-row:2;padding:4px 9px 0 3px}
.vscroll{height:797px;display:flex;flex-direction:column}
.arrow-btn{width:16px;height:16px;flex:none;display:flex;align-items:center;justify-content:center}
.vthumb{height:48px;margin-top:367px;flex:none;display:block}
.v-fill{flex:1}
.hscroll-cell{grid-column:2;grid-row:3;padding-top:3px}
.hscroll{height:16px;display:flex}
.hthumb{width:268px;margin-left:494px;flex:none;display:block}
.h-fill{flex:1}
.cms-cell{grid-column:3;grid-row:3;padding:2px 0 0 4px}
.snapbar{width:33px;flex:none;border-left:1px solid #808080;padding:2px 0 0 2px;display:flex;flex-direction:column;box-shadow:inset 1px 0 0 #fff}
.snap{width:28px;height:28px;flex:none;display:flex;align-items:center;justify-content:center}
.snap svg{width:16px;height:16px;flex:none}
.snap.on{background:repeating-conic-gradient(#f4f3f0 0 25%,#fff 0 50%) 0 0/2px 2px;border:1px solid;border-color:#808080 #fff #fff #808080}
.snap-sep{height:12px;flex:none;display:flex;align-items:center;justify-content:center}
.snap-sep::before{content:"";width:18px;height:2px;border-top:1px solid #808080;border-bottom:1px solid #fff}

.palette{height:21px;flex:none;display:flex;align-items:stretch;padding:1px 15px 2px 2px;border-top:1px solid #222;position:relative;overflow:hidden}
.swatch{width:17px;height:18px;flex:none;display:block}
.swatch:nth-last-child(2){width:14px}
.none{background:#fff}
.none svg{width:17px;height:18px;display:block}
.palette-arrow{position:absolute;left:1668px;top:5px}
.pscroll{height:17px;flex:none;display:flex;padding-right:14px;border-bottom:1px solid #000}
.p-left{width:16px;flex:none;background:#d4d0c8;display:flex;align-items:center;justify-content:center}
.pthumb{width:369px;flex:none;display:block}

.status{height:29px;flex:none;display:flex;align-items:center;border-bottom:1px solid #fff}
.fs{width:126px;flex:none;padding-left:2px}
.fs-row{display:flex;align-items:center;height:14px;font-size:12px}
.fs-label{width:39px;flex:none}
.fs-none{width:80px;text-align:center;font-size:11px}
.stroke-sw{width:62px;height:14px;background:#000;flex:none}
.fs-w{margin-left:3px}
.op-label{width:15px;flex:none;font-size:12px}
.stat-sep{width:2px;height:26px;margin-left:3px;border-left:1px solid #808080;border-right:1px solid #fff;flex:none}
.stat-ico{width:18px;height:18px;flex:none;margin-left:4px}
.eye{margin-left:2px}
.layer-combo{width:75px;height:26px;margin-left:2px;flex:none;display:flex;align-items:center;background:#fff;padding:0 1px 0 4px;border:1px solid;border-color:#808080 #fff #fff #808080;box-shadow:inset 1px 1px 0 #404040}
.layer-name{flex:1;font-weight:bold;font-size:11px}
.layer-arrow{height:22px;margin:0}
.message{margin-left:5px;white-space:nowrap;font-size:11px}
.coords{margin-left:auto;display:flex;align-items:center;height:28px;border-left:1px solid #808080;padding-left:3px;width:162px;flex:none}
.xy{display:grid;grid-template-columns:20px 41px;row-gap:2px;font-family:"Liberation Mono",monospace;font-size:11px;line-height:12px;width:70px;flex:none}
.xy span:nth-child(even){text-align:right}
.z-label{width:13px;flex:none;font-size:12px}
.grip{width:11px;height:11px;margin:13px 0 0 6px;flex:none;background:repeating-linear-gradient(135deg,transparent 0 2px,#808080 2px 3px,#fff 3px 4px)}

.taskbar{height:28px;flex:none;display:flex;align-items:center;padding-left:2px;font-size:12px}
.start{width:51px;height:23px;display:flex;align-items:center;justify-content:center;gap:2px;flex:none}
.ql{width:23px;height:18px;flex:none;display:flex;justify-content:center}
.ql svg{width:17px;height:17px}
.start+.ql{margin-left:4px}
.task{width:159px;height:23px;flex:none;display:flex;align-items:center;gap:3px;padding:0 3px;white-space:nowrap;overflow:hidden}
.task-ico{width:16px;height:16px;flex:none}
.task span{font-size:11px}
.ql+.task{margin-left:15px}
.active{margin-left:4px;background:repeating-conic-gradient(#d4d0c8 0 25%,#fff 0 50%) 0 0/2px 2px;border:1px solid;border-color:#404040 #fff #fff #404040}
.en{margin-left:auto;width:16px;height:16px;background:#0a246a;color:#fff;font-size:11px;line-height:16px;text-align:center;flex:none}
.tray-sep{width:2px;height:22px;margin:0 6px 0 5px;border-left:1px solid #808080;border-right:1px solid #fff;flex:none}
.tray{width:96px;height:23px;flex:none;display:flex;align-items:center;gap:2px;padding-left:4px;border:1px solid;border-color:#808080 #fff #fff #808080}
.chev{font-size:13px;width:12px}
.clock{margin-left:auto;margin-right:10px}
.tooltip{position:absolute;left:1189px;top:1017px;width:225px;height:30px;background:#ffffe1;border:1px solid #000;padding:1px;line-height:13.500px;font-size:10.700px;white-space:nowrap}
```
